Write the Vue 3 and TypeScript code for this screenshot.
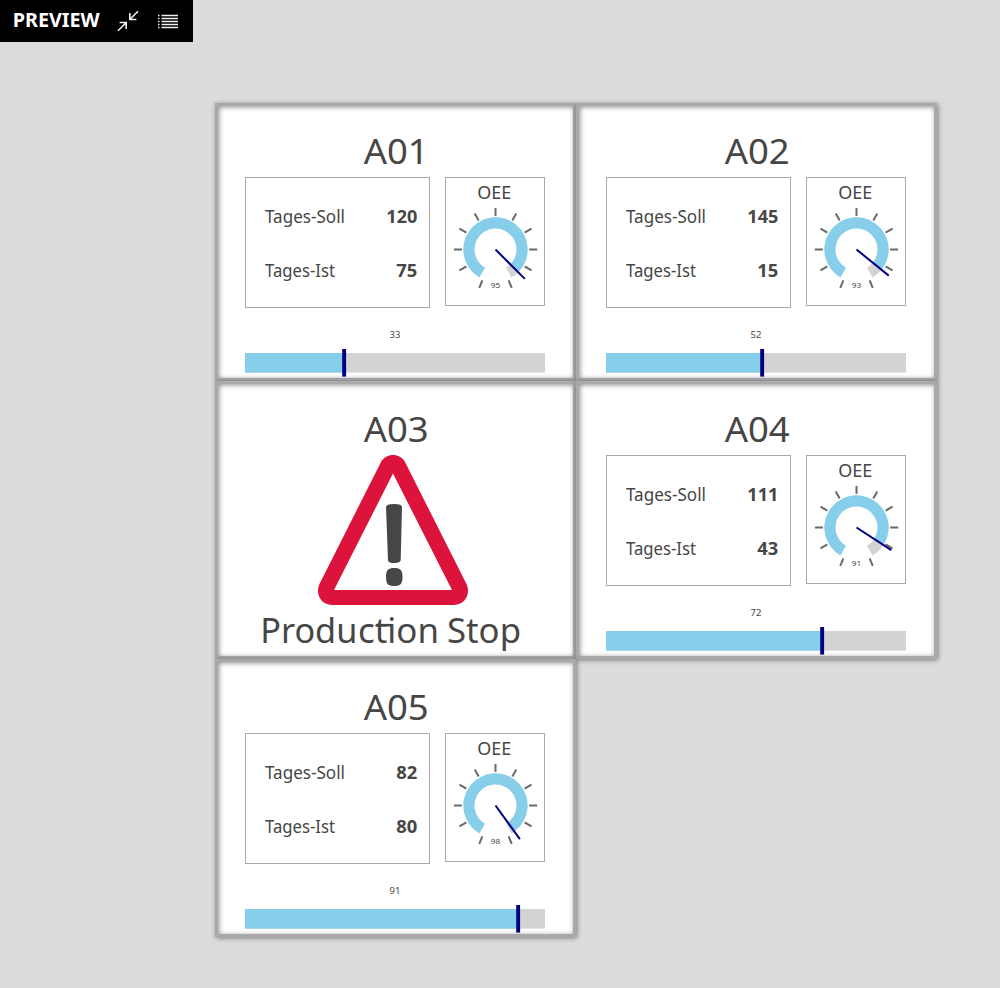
<script setup lang="ts">
interface Station {
  name: string
  target?: number
  actual?: number
  oee?: number
  progress?: number
}

const stations: Station[] = [
  { name: 'A01', target: 120, actual: 75, oee: 95, progress: 33 },
  { name: 'A02', target: 145, actual: 15, oee: 93, progress: 52 },
  { name: 'A03' },
  { name: 'A04', target: 111, actual: 43, oee: 91, progress: 72 },
  { name: 'A05', target: 82, actual: 80, oee: 98, progress: 91 },
]

const ticks = [-157, -120, -90, -60, -30, 0, 30, 60, 90, 120, 157]

function point(radius: number, angle: number): string {
  const a = (angle * Math.PI) / 180
  return `${(radius * Math.sin(a)).toFixed(3)} ${(-radius * Math.cos(a)).toFixed(3)}`
}

function arc(from: number, to: number): string {
  const outer = 32.2
  const inner = 21
  const large = to - from > 180 ? 1 : 0
  return `M${point(outer, from)} A${outer} ${outer} 0 ${large} 1 ${point(outer, to)} L${point(inner, to)} A${inner} ${inner} 0 ${large} 0 ${point(inner, from)}Z`
}

function angleOf(value: number): number {
  return -150 + value * 3
}

function digitsWidth(value: number): number {
  return String(value).length === 3 ? 31 : 21
}
</script>

<template>
  <div class="page">
    <header class="toolbar">
      <svg class="brand" width="88" height="42"><text x="-0.3" y="27" textLength="87" lengthAdjust="spacingAndGlyphs">PREVIEW</text></svg>
      <svg class="collapse" width="20" height="20" viewBox="0 0 20 20">
        <path d="M20 0.3 12 8.3M11.8 2v6.5h6.6M0 19.7 8 11.7M1.6 11.5h6.6V18" />
      </svg>
      <svg class="list" width="20" height="15" viewBox="0 0 20 15">
        <path d="M0 1.5h1.5M3.5 1.5H20M0 4.5h1.5M3.5 4.5H20M0 7.5h1.5M3.5 7.5H20M0 10.5h1.5M3.5 10.5H20M0 13.5h1.5M3.5 13.5H20" />
      </svg>
    </header>

    <main class="grid">
      <section v-for="s in stations" :key="s.name" class="card">
        <svg class="title" width="300" height="71"><text x="118.7" y="58" textLength="65" lengthAdjust="spacingAndGlyphs">{{ s.name }}</text></svg>

        <template v-if="s.oee !== undefined">
          <div class="panels">
            <div class="counts">
              <svg class="row" width="153" height="54">
                <text x="0" y="26" textLength="80" lengthAdjust="spacingAndGlyphs">Tages-Soll</text>
                <text class="num" x="152.3" y="26" text-anchor="end" :textLength="digitsWidth(s.target!)" lengthAdjust="spacingAndGlyphs">{{ s.target }}</text>
              </svg>
              <svg class="row" width="153" height="54">
                <text x="0" y="26" textLength="70" lengthAdjust="spacingAndGlyphs">Tages-Ist</text>
                <text class="num" x="152.3" y="26" text-anchor="end" :textLength="digitsWidth(s.actual!)" lengthAdjust="spacingAndGlyphs">{{ s.actual }}</text>
              </svg>
            </div>
            <div class="gauge">
              <svg width="98" height="127" viewBox="0 0 98 127">
                <text class="oee" x="48.2" y="21" text-anchor="middle" textLength="34" lengthAdjust="spacingAndGlyphs">OEE</text>
                <g transform="translate(49.5 71.5)">
                  <path class="rest" :d="arc(angleOf(s.oee), 150)" />
                  <path class="fill" :d="arc(-150, angleOf(s.oee))" />
                  <line v-for="t in ticks" :key="t" class="tick" x1="0" y1="-33.6" x2="0" y2="-41.6" :transform="`rotate(${t})`" />
                  <line class="needle" x1="0" y1="0" x2="0" y2="-41.5" :transform="`rotate(${angleOf(s.oee)})`" />
                </g>
                <text class="tiny" x="49.5" y="110" text-anchor="middle" textLength="9.4" lengthAdjust="spacingAndGlyphs">{{ s.oee }}</text>
              </svg>
            </div>
          </div>
          <svg class="bar" width="300" height="53">
            <text class="small" x="150" y="15" text-anchor="middle" textLength="10.8" lengthAdjust="spacingAndGlyphs">{{ s.progress }}</text>
            <rect class="rest" x="0" y="30" width="300" height="19.6" />
            <rect class="fill" x="0" y="30" :width="s.progress! * 3" height="19.6" />
            <rect class="marker" :x="s.progress! * 3 - 1.8" y="26" width="3.9" height="27.6" />
          </svg>
        </template>

        <template v-else>
          <svg class="warning" width="150" height="150" viewBox="0 0 150 150">
            <path class="frame" fill-rule="evenodd" d="M63 7C68-2.3 82-2.3 87 7L148.5 129C153 139 147 150 136 150H14C3 150-3 139 1.5 129ZM75 18.5 16 135H134Z" />
            <path class="mark" d="M68 52Q68 49 76 49T84 52L82.7 105Q82.6 108 76.2 108T70 105ZM76.2 113C82.3 113 84.5 115 84.5 122S82.3 131 76.2 131 68 129 68 122 70.2 113 76.2 113Z" />
          </svg>
          <svg class="stop" width="300" height="50">
            <text x="15.3" y="38" textLength="97" lengthAdjust="spacingAndGlyphs">Produ</text>
            <text x="113" y="38" textLength="81" lengthAdjust="spacingAndGlyphs">ction</text>
            <path d="M131 20.2h15.5" />
            <text x="202" y="38" textLength="74" lengthAdjust="spacingAndGlyphs">Stop</text>
          </svg>
        </template>
      </section>
    </main>
  </div>
</template>

<style>
html,
body {
  margin: 0;
  background: #dcdcdc;
}
</style>

<style scoped>
.page {
  width: 1000px;
  height: 988px;
  overflow: hidden;
  background: #dcdcdc;
  font-family: "Noto Sans", "Open Sans", sans-serif;
}
svg {
  display: block;
  overflow: visible;
  flex: none;
}
text {
  fill: #464646;
}
.toolbar {
  box-sizing: border-box;
  width: 193px;
  height: 42px;
  padding-left: 13px;
  display: flex;
  align-items: center;
  background: #000;
}
.brand text {
  fill: #fff;
  font-weight: 700;
  font-size: 19.4px;
}
.collapse {
  margin-left: 17px;
}
.list {
  margin-left: 20px;
}
.collapse path,
.list path {
  fill: none;
  stroke: #f0f0f0;
  stroke-width: 1.6;
}
.list path {
  stroke-width: 1.3;
}
.grid {
  display: grid;
  grid-template-columns: 361px 361px;
  grid-auto-rows: 278px;
  margin: 61px 0 0 215px;
}
.card {
  box-sizing: border-box;
  width: 361px;
  height: 278px;
  border: 3px solid #a9a9a9;
  padding: 0 27px;
  background: #fff;
  box-shadow: 1px 1px 5px rgba(0, 0, 0, 0.45), inset 1px 1px 5px rgba(0, 0, 0, 0.45);
}
.title text,
.stop text {
  font-size: 35px;
}
.stop path {
  stroke: #464646;
  stroke-width: 2.6;
}
.panels {
  width: 300px;
  display: flex;
  justify-content: space-between;
  align-items: flex-start;
}
.counts {
  box-sizing: border-box;
  width: 185px;
  height: 131px;
  padding: 19px 0 0 19px;
  border: 1px solid #a9a9a9;
}
.row text {
  font-size: 18px;
}
.row .num {
  font-weight: 700;
}
.gauge {
  box-sizing: border-box;
  width: 100px;
  height: 129px;
  border: 1px solid #a9a9a9;
}
.row text.num {
  font-size: 18.4px;
}
.oee {
  font-size: 18.4px;
}
.tiny {
  font-size: 7.5px;
}
.small {
  font-size: 8.5px;
}
.bar {
  margin-top: 15px;
}
.rest {
  fill: #d3d3d3;
}
.fill {
  fill: #87ceeb;
}
.tick {
  stroke: #696969;
  stroke-width: 2;
}
.needle {
  stroke: #000080;
  stroke-width: 2;
}
.marker {
  fill: #000080;
}
.warning {
  margin: 0 0 0 73px;
  height: 150px;
}
.frame {
  fill: #dc143c;
}
.mark {
  fill: #464646;
}
</style>
